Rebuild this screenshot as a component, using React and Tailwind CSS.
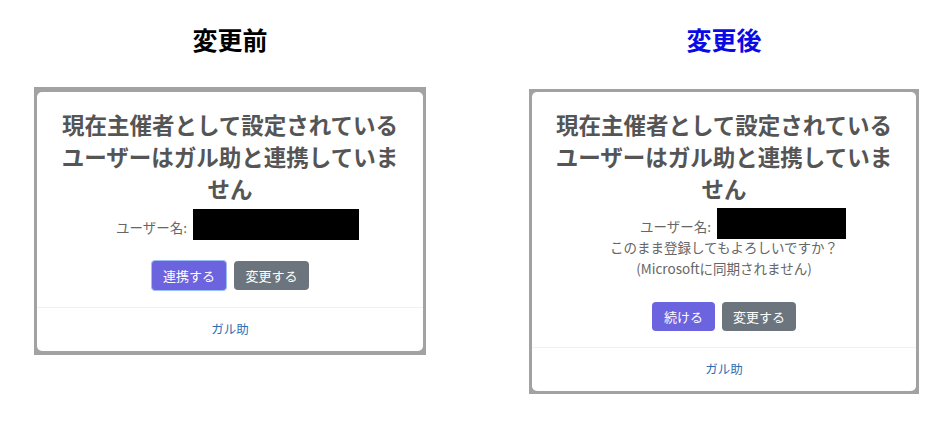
import React from 'react';

const jp = { fontFamily: '"Noto Sans CJK JP", "Noto Sans", sans-serif' };

const Title = () => (
  <h3 className="text-center text-[22.5px] leading-[32px] font-bold text-[#555555] whitespace-nowrap">
    現在主催者として設定されている
    <br />
    ユーザーはガル助と連携していま
    <br />
    せん
  </h3>
);

const Footer = () => (
  <div className="border-t border-[#f0f0f0] h-[44px] flex items-center justify-center text-[12.5px] text-[#2c6db3]">
    ガル助
  </div>
);

export default function App() {
  return (
    <div className="w-[937px] h-[421px] bg-white flex" style={jp}>
      {/* 変更前 */}
      <div className="ml-[34px] w-[392px] flex flex-col">
        <div className="h-[87px] pt-[23px] text-center text-[25px] leading-[32px] font-bold text-black">
          変更前
        </div>
        <div className="bg-[#a2a2a2] pt-[5px] px-[3px] pb-[4px]">
          <div className="bg-white rounded-[5px] flex flex-col">
            <div className="pt-[16px]">
              <Title />
              <div className="flex items-center pl-[79px] mt-[5px]">
                <span className="text-[13.5px] text-[#666666] mt-[5px] mr-[6px]">ユーザー名:</span>
                <div className="h-[31px] w-[166px] bg-black" />
              </div>
              <div className="flex items-center justify-center gap-[7px] mt-[20px] mb-[16px]">
                <button className="h-[31px] w-[76px] rounded-[4px] bg-[#6c63df] text-white text-[13px] border-[1.5px] border-[#9cbff5]">
                  連携する
                </button>
                <button className="h-[29px] w-[75px] rounded-[4px] bg-[#6c757d] text-white text-[13px]">
                  変更する
                </button>
              </div>
            </div>
            <Footer />
          </div>
        </div>
      </div>

      {/* 変更後 */}
      <div className="ml-[103px] w-[390px] flex flex-col">
        <div className="h-[89px] pt-[23px] text-center text-[25px] leading-[32px] font-bold text-[#0a0ae6]">
          変更後
        </div>
        <div className="bg-[#a2a2a2] pt-[3px] px-[3px] pb-[3px]">
          <div className="bg-white rounded-[5px] flex flex-col">
            <div className="pt-[16px]">
              <Title />
              <div className="flex items-center pl-[108px] mt-[4px]">
                <span className="text-[13.5px] text-[#666666] mt-[5px] mr-[6px]">ユーザー名:</span>
                <div className="h-[31px] w-[129px] bg-black" />
              </div>
              <div className="-mt-[2px] text-center text-[13.5px] leading-[21px] text-[#666666]">
                <p>このまま登録してもよろしいですか？</p>
                <p>(Microsoftに同期されません)</p>
              </div>
              <div className="flex items-center justify-center gap-[7px] mt-[23px] mb-[16px]">
                <button className="h-[29px] w-[63px] rounded-[4px] bg-[#6c63df] text-white text-[13px]">
                  続ける
                </button>
                <button className="h-[29px] w-[74px] rounded-[4px] bg-[#6c757d] text-white text-[13px]">
                  変更する
                </button>
              </div>
            </div>
            <Footer />
          </div>
        </div>
      </div>
    </div>
  );
}
